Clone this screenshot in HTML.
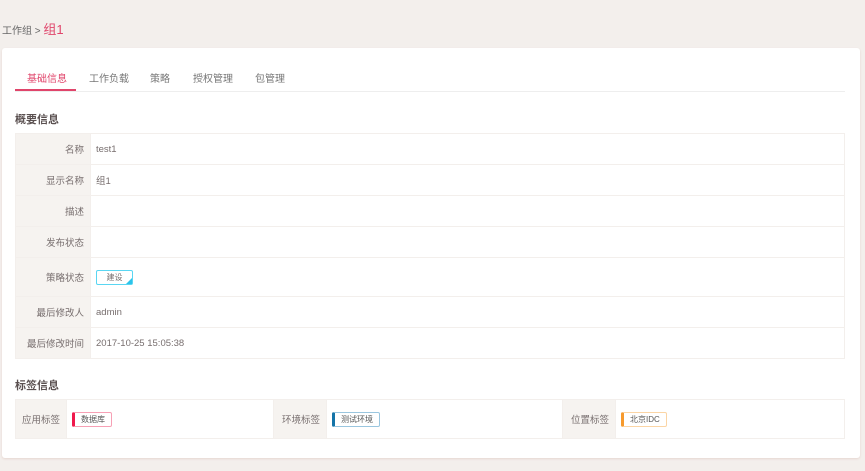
<!DOCTYPE html><html><head><meta charset="utf-8"><style>
*{margin:0;padding:0;box-sizing:border-box}
body{width:865px;height:471px;background:#f3efec;font-family:"Liberation Sans","Noto Sans CJK SC",sans-serif;color:#555;position:relative;overflow:hidden;font-size:10px}
.bc{position:absolute;left:2px;top:19px;font-size:10px;color:#666}
.bc b{font-weight:normal;color:#e0456b;font-size:13px}
.card{position:absolute;left:2px;top:48px;width:858px;height:410px;background:#fff;border-radius:3px;box-shadow:0 1px 2px #e6d6d0}
.tabs{position:absolute;left:13px;top:20px;width:830px;height:24px;border-bottom:1px solid #eee}
.tabs span{position:absolute;top:2px;font-size:10px;color:#777}
.tabs .a{color:#e0456b}
.ul{position:absolute;left:13px;top:41px;width:61px;height:2px;background:#e0456b}
h3{position:absolute;left:13px;font-size:11px;color:#5a5050;font-weight:bold}
table{position:absolute;left:13px;border-collapse:collapse;width:830px}
td{border:1px solid #f3efec;font-size:9.5px;color:#776e6e}
td.l{background:#f6f3f0;text-align:right;padding-right:6px;width:75px}
td.v{padding-left:5px}
.tag{display:inline-block;border:1px solid;padding:1px 6px;font-size:8px;color:#555;border-left-width:3px;height:15px;line-height:12px;border-radius:2px}
</style></head><body>
<div class="bc">工作组 &gt; <b>组1</b></div>
<div class="card">
<div class="tabs"><span class="a" style="left:12px">基础信息</span><span style="left:74px">工作负载</span><span style="left:135px">策略</span><span style="left:178px">授权管理</span><span style="left:240px">包管理</span></div>
<div class="ul"></div>
<h3 style="top:63px">概要信息</h3>
<table style="top:85px">
<tr style="height:31px"><td class="l">名称</td><td class="v">test1</td></tr>
<tr style="height:31px"><td class="l">显示名称</td><td class="v">组1</td></tr>
<tr style="height:31px"><td class="l">描述</td><td class="v"></td></tr>
<tr style="height:31px"><td class="l">发布状态</td><td class="v"></td></tr>
<tr style="height:39px"><td class="l">策略状态</td><td class="v"><span style="display:inline-block;position:relative;border:1px solid #5ad6f2;width:37px;height:15px;text-align:center;font-size:8px;line-height:13px;border-radius:2px">建设<i style="position:absolute;right:0;bottom:0;border:3px solid transparent;border-right-color:#2cc3ea;border-bottom-color:#2cc3ea"></i></span></td></tr>
<tr style="height:31px"><td class="l">最后修改人</td><td class="v">admin</td></tr>
<tr style="height:31px"><td class="l">最后修改时间</td><td class="v">2017-10-25 15:05:38</td></tr>
</table>
<h3 style="top:329px">标签信息</h3>
<table style="top:351px">
<tr style="height:39px">
<td class="l" style="width:51px">应用标签</td><td class="v" style="width:207px"><span class="tag" style="border-color:#f7a0b5;border-left-color:#f0184b">数据库</span></td>
<td class="l" style="width:53px">环境标签</td><td class="v" style="width:236px"><span class="tag" style="border-color:#9ac6df;border-left-color:#1474a8">测试环境</span></td>
<td class="l" style="width:53px">位置标签</td><td class="v"><span class="tag" style="border-color:#fbd5a5;border-left-color:#f79a2c">北京IDC</span></td>
</tr></table>
</div>
</body></html>
